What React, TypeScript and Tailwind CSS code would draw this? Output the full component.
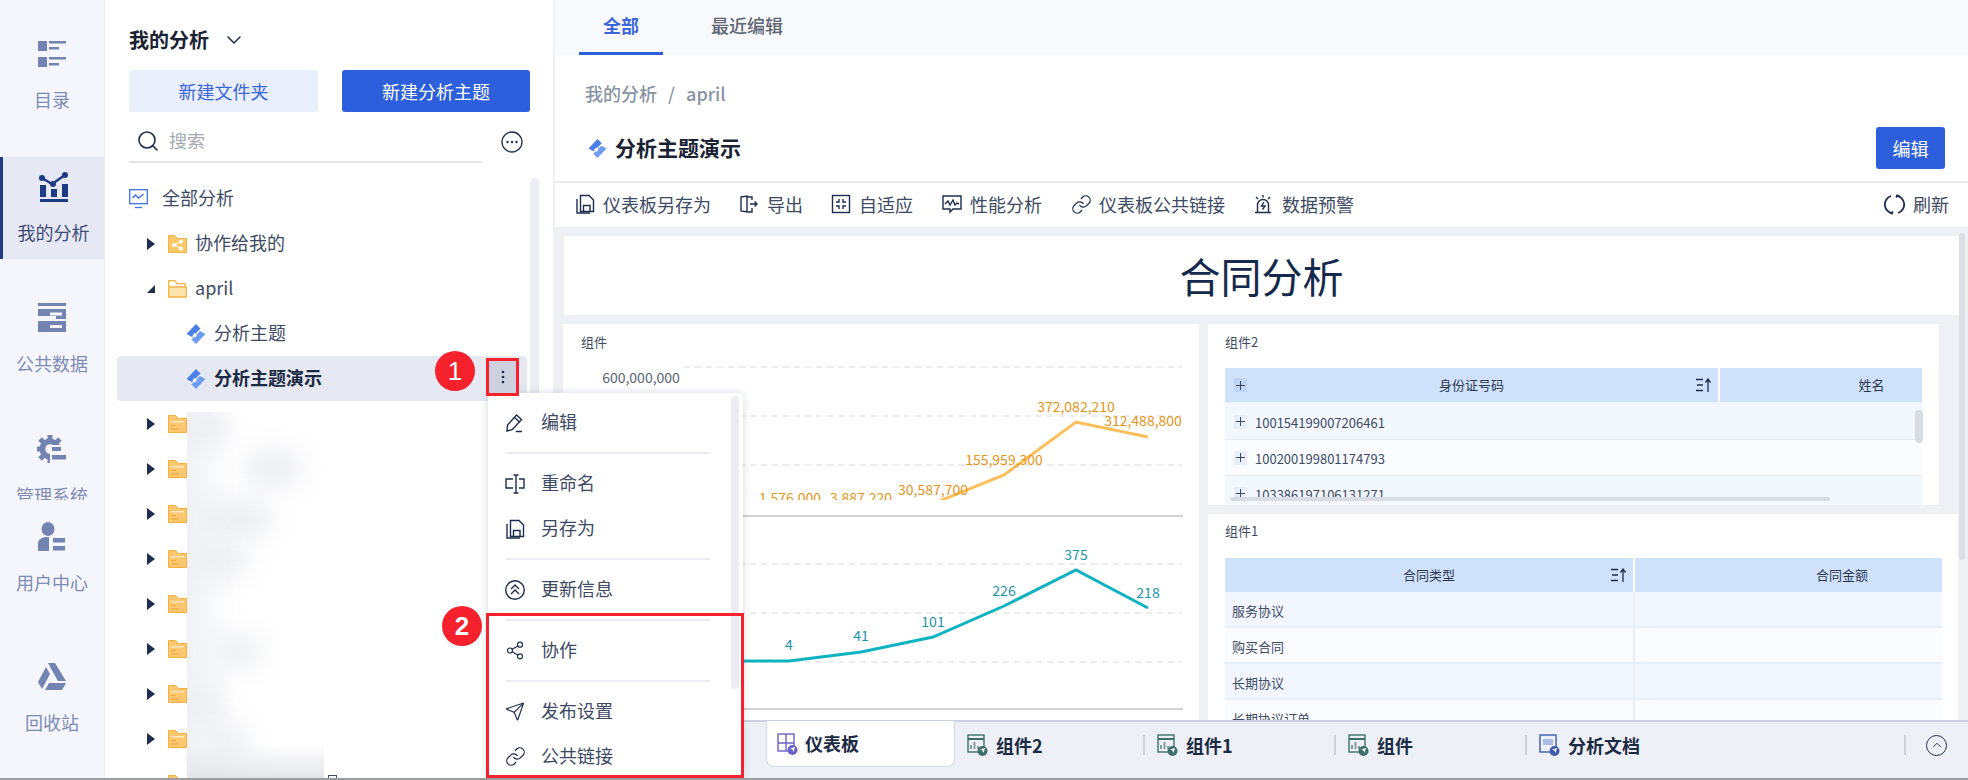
import React from "react";
import { ChevronDown, ChevronUp, Link, Search, Send, Share2 } from "lucide-react";

const ink = "#1e2d4f";

// 左侧导航图标
function RailIcon({ name, color }: { name: string; color: string }) {
  return (
    <svg width="30" height="30" viewBox="0 0 30 30" fill={color} className="shrink-0">
      {name === "list" && (
        <>
          <rect x="1" y="2" width="9" height="10" />
          <rect x="1" y="18" width="9" height="10" />
          <rect x="12" y="2" width="17" height="2.5" />
          <rect x="12" y="8" width="10" height="2.5" />
          <rect x="12" y="18" width="17" height="2.5" />
          <rect x="12" y="24" width="10" height="2.5" />
        </>
      )}
      {name === "chart" && (
        <>
          <rect x="1" y="27" width="28" height="3" />
          <rect x="1" y="13" width="6" height="12" />
          <rect x="12" y="17" width="6" height="8" />
          <rect x="23" y="12" width="6" height="13" />
          <path d="M3 6l10 6 13-9" fill="none" stroke={color} strokeWidth="2.5" />
          <circle cx="3" cy="6" r="3" />
          <circle cx="14" cy="12" r="3" />
          <circle cx="26" cy="3" r="3" />
        </>
      )}
      {name === "data" && (
        <>
          <rect x="1" y="0" width="28" height="3" />
          <path d="M1 6h28v10H19v-3H1zM1 18h28v11H1z" />
          <rect x="13" y="9.500" width="12" height="3" fill="#f4f6fb" />
          <rect x="13" y="22" width="12" height="3" fill="#f4f6fb" />
        </>
      )}
      {name === "gear" && (
        <>
          {[0, 45, 90, 135, 180, 225, 270, 315].map((a) => (
            <rect key={a} x="10.500" y="0" width="5" height="6" transform={`rotate(${a} 13 14)`} />
          ))}
          <circle cx="13" cy="14" r="10.500" />
          <circle cx="13" cy="14" r="4.800" fill="#f4f6fb" />
          <rect x="13" y="10" width="17" height="20" fill="#f4f6fb" />
          <rect x="15" y="12" width="9" height="4" />
          <rect x="15" y="20" width="14" height="4.500" />
          <rect x="13" y="6" width="4" height="3" />
        </>
      )}
      {name === "user" && (
        <>
          <ellipse cx="11" cy="7" rx="6.500" ry="7" />
          <path d="M1 29v-7c0-5 4-7 9-7h2v14z" />
          <rect x="16" y="16" width="12" height="4.500" />
          <rect x="16" y="24" width="12" height="4.500" />
        </>
      )}
      {name === "drive" && (
        <>
          <path d="M11 1h7l11 18h-8z" />
          <path d="M9 5l4 7-8 15-4-7z" />
          <path d="M12 21h17l-4 7H8z" />
        </>
      )}
    </svg>
  );
}

function RailItem({ label, icon, active, top, clip }: { label: string; icon: string; active?: boolean; top: number; clip?: boolean }) {
  return (
    <div
      style={{ marginTop: top }}
      className={`flex flex-col items-center pt-[15px] shrink-0 overflow-hidden ${clip ? "h-[80px]" : "h-[102px]"} ${
        active ? "bg-[#e6e9f3] border-l-[3px] border-[#1f3a85]" : ""
      }`}
    >
      <RailIcon name={icon} color={active ? "#1f3a85" : "#7384b3"} />
      <span className={`mt-[18px] shrink-0 text-[18px] leading-[24px] ${active ? "text-[#3f4c78]" : "text-[#7d8bb5]"}`}>{label}</span>
    </div>
  );
}

function Diamond({ size = 20 }: { size?: number }) {
  return (
    <svg width={size} height={size} viewBox="0 0 20 20" className="shrink-0">
      <polygon points="10,0 14.500,4.500 6,13 .5,10" fill="#4a7ee8" />
      <polygon points="19.500,10 14,7 5.500,15.500 10,20" fill="#6f9cf3" />
      <polygon points="8.500,9 11,11.500 9,13.500 6.500,11" fill="#fff" />
    </svg>
  );
}

function Folder() {
  return (
    <svg width="19" height="18" viewBox="0 0 19 18" className="shrink-0">
      <path d="M.5 17.500V.5h7l3 3h8v14z" fill="#fcc76e" stroke="#f5b040" />
      <rect x="3" y="6" width="13" height="1.500" fill="#feeac2" />
      <rect x="3" y="10" width="5" height="1" fill="#eda93a" />
      <rect x="3" y="13" width="8" height="2" fill="#f3b552" />
    </svg>
  );
}

function Arrow({ open }: { open?: boolean }) {
  return (
    <svg width="8" height="12" viewBox="0 0 8 12" fill="#1e2d4f" className="shrink-0">
      {open ? <path d="M8 2v8H0z" /> : <path d="M0 0l8 6-8 6z" />}
    </svg>
  );
}

function TreeFolder() {
  return (
    <div className="h-[45px] flex items-center pl-[30px] gap-[13px] shrink-0">
      <Arrow />
      <Folder />
    </div>
  );
}

function TreeLabel({ children, className = "" }: { children: React.ReactNode; className?: string }) {
  return <span className={`-mt-[2px] ${className}`}>{children}</span>;
}

function Tree() {
  return (
    <div className="mt-[13px] flex-1 flex flex-col overflow-hidden text-[18px] text-[#3d4a63] ml-[12px] w-[410px]">
      <div className="h-[45px] flex items-center pl-[12px] shrink-0">
        <svg width="19" height="20" viewBox="0 0 19 20" fill="none" stroke="#3f74e6" strokeWidth="1.300">
          <rect x=".7" y=".7" width="17.600" height="14" />
          <path d="M3.500 9l3-3 3 3 5-4" strokeWidth="1.500" />
          <path d="M6 18.500h7" />
        </svg>
        <TreeLabel className="ml-[14px]">全部分析</TreeLabel>
      </div>
      <div className="h-[45px] flex items-center pl-[30px] shrink-0">
        <Arrow />
        <svg width="19" height="18" viewBox="0 0 19 18" className="ml-[13px]">
          <path d="M.5 17.500V.5h6l3 3h9v14z" fill="#fbc76b" stroke="#f5b343" />
          <circle cx="6" cy="10" r="2" fill="#fff" />
          <circle cx="13" cy="6.500" r="2" fill="#fff" />
          <circle cx="13" cy="13.500" r="2" fill="#fff" />
          <path d="M6 10l7-3.500M6 10l7 3.500" stroke="#fff" />
        </svg>
        <TreeLabel className="ml-[8px]">协作给我的</TreeLabel>
      </div>
      <div className="h-[45px] flex items-center pl-[30px] shrink-0">
        <Arrow open />
        <svg width="19" height="18" viewBox="0 0 19 18" className="ml-[13px]" fill="none" stroke="#f5b343" strokeWidth="1.300">
          <path d="M.7 17V.7h6l2.500 3H17v3" />
          <path d="M.7 17V7h17.600v10z" fill="#fde3ae" />
        </svg>
        <TreeLabel className="ml-[8px]">april</TreeLabel>
      </div>
      <div className="h-[45px] flex items-center pl-[69px] gap-[8px] shrink-0">
        <Diamond />
        <TreeLabel>分析主题</TreeLabel>
      </div>
      <div className="h-[45px] flex items-center pl-[69px] gap-[8px] bg-[#e6e9f2] rounded-[4px] shrink-0">
        <Diamond />
        <TreeLabel className="font-bold text-[#1c2a44]">分析主题演示</TreeLabel>
      </div>
      {[0, 1, 2, 3, 4, 5, 6, 7, 8].map((i) => (
        <TreeFolder key={i} />
      ))}
    </div>
  );
}

// 打码区域：几块模糊的灰斑
const blurSpots = [
  { left: 0, top: 0, width: 40, height: 30 },
  { left: 58, top: 40, width: 56, height: 32 },
  { left: 15, top: 92, width: 70, height: 30 },
  { left: 10, top: 135, width: 50, height: 28 },
  { left: 30, top: 225, width: 44, height: 28 },
  { left: 5, top: 275, width: 30, height: 30 },
  { left: 22, top: 315, width: 40, height: 30 },
];

function Blurred() {
  return (
    <div className="absolute left-[82px] top-[412px] w-[137px] h-[366px] overflow-hidden bg-gradient-to-r from-[#f1f2f5] to-white to-[35%]">
      {blurSpots.map((s) => (
        <div key={s.top} style={s} className="absolute rounded-full bg-[#e9eaee] blur-[14px]" />
      ))}
      <div className="absolute left-0 right-0 bottom-0 h-[34px] bg-gradient-to-b from-white/0 to-[#e4e5e9]" />
    </div>
  );
}

function Sidebar() {
  return (
    <aside className="w-[450px] shrink-0 bg-white flex flex-col relative border-r-2 border-[#eef0f4]">
      <div className="pl-[24px] pr-[23px]">
        <div className="mt-[24px] h-[32px] flex items-center text-[20px] leading-[32px] font-bold text-[#1a2233]">
          我的分析
          <ChevronDown size={24} strokeWidth={1.500} className="ml-[13px] text-[#1e2d4f]" />
        </div>
        <div className="mt-[14px] flex justify-between">
          <div className="w-[189px] h-[42px] flex items-center justify-center rounded-[3px] bg-[#e8effb] text-[#3c64db] text-[18px]">新建文件夹</div>
          <div className="w-[188px] h-[42px] flex items-center justify-center rounded-[3px] bg-[#2d5fdc] text-white text-[18px]">新建分析主题</div>
        </div>
        <div className="mt-[8px] flex items-start">
          <div className="w-[353px] h-[43px] border-b-2 border-[#e2e4ea] flex items-center pl-[7px]">
            <Search size={24} strokeWidth={1.600} className="text-[#1e2d4f]" />
            <span className="ml-[9px] text-[18px] text-[#a5a9b2]">搜索</span>
          </div>
          <svg width="22" height="22" viewBox="0 0 22 22" className="ml-[19px] mt-[11px]" fill="#1e2d4f">
            <circle cx="11" cy="11" r="10" fill="none" stroke="#1e2d4f" strokeWidth="1.300" />
            <circle cx="6.500" cy="11" r="1.200" />
            <circle cx="11" cy="11" r="1.200" />
            <circle cx="15.500" cy="11" r="1.200" />
          </svg>
        </div>
      </div>
      <Tree />
      <div className="absolute left-[425px] top-[178px] w-[9px] h-[500px] rounded-full bg-[#ecedf2]" />
      <Blurred />
      <div className="absolute left-[223px] top-[775px] w-[9px] h-[6px] border border-[#3d4a63]" />
    </aside>
  );
}

function MenuItem({ label, icon }: { label: string; icon: React.ReactNode }) {
  return (
    <div className="h-[45px] flex items-center pl-[17px] text-[18px] text-[#3d4a63]">
      <span className="w-[20px] h-[20px] flex items-center justify-center">{icon}</span>
      <span className="ml-[16px] -mt-[2px]">{label}</span>
    </div>
  );
}

function MenuLine() {
  return <div className="my-[7px] h-[2px] ml-[18px] w-[204px] bg-[#ebecf1]" />;
}

function Svg20({ children }: { children: React.ReactNode }) {
  return (
    <svg width="20" height="20" viewBox="0 0 20 20" fill="none" stroke={ink} strokeWidth="1.400" className="shrink-0">
      {children}
    </svg>
  );
}

const saveAsIcon = (
  <Svg20>
    <path d="M5.500 1.500h8.500l4.500 4.500v11.500h-13z" />
    <path d="M8.500 17.500v-6h6.500v6" />
    <path d="M2 5v14h13" />
  </Svg20>
);

const linkIcon = <Link size={21} strokeWidth={1.400} color={ink} className="shrink-0" />;

function ContextMenu() {
  return (
    <div className="absolute left-[488px] top-[393px] w-[255px] h-[387px] bg-white rounded-t-[6px] shadow-[0_0_8px_rgba(30,45,80,0.18)] pt-[7px]">
      <MenuItem
        label="编辑"
        icon={
          <Svg20>
            <path d="M2 18l.5-6 9-10 5 4.500-9 10z" />
            <path d="M11 18.500h6M9.500 4.500l5 4.500" />
          </Svg20>
        }
      />
      <MenuLine />
      <MenuItem
        label="重命名"
        icon={
          <Svg20>
            <path d="M8 5H1v9h7M14 5h5v9h-5" />
            <path d="M11 1v18M8.500 1h5M8.500 19h5" />
          </Svg20>
        }
      />
      <MenuItem label="另存为" icon={saveAsIcon} />
      <MenuLine />
      <MenuItem
        label="更新信息"
        icon={
          <Svg20>
            <circle cx="10" cy="10" r="9.300" />
            <path d="M6 9l4-4 4 4M6 14l4-4 4 4" />
          </Svg20>
        }
      />
      <MenuLine />
      <MenuItem label="协作" icon={<Share2 size={21} strokeWidth={1.400} color={ink} />} />
      <MenuLine />
      <MenuItem label="发布设置" icon={<Send size={21} strokeWidth={1.400} color={ink} />} />
      <MenuItem label="公共链接" icon={linkIcon} />
      <div className="absolute left-[243px] top-[3px] w-[8px] h-[293px] rounded-full bg-[#ecedf2]" />
    </div>
  );
}

function ToolItem({ label, icon, gap, left }: { label: string; icon: React.ReactNode; gap: number; left: number }) {
  return (
    <div style={{ marginLeft: left }} className="flex items-center text-[18px] text-[#3d4a63]">
      {icon}
      <span style={{ marginLeft: gap }}>{label}</span>
    </div>
  );
}

function Toolbar() {
  return (
    <div className="h-[44px] shrink-0 flex items-center bg-white pb-[2px]">
      <ToolItem left={20} gap={8} label="仪表板另存为" icon={saveAsIcon} />
      <ToolItem
        left={28}
        gap={8}
        label="导出"
        icon={
          <Svg20>
            <path d="M2 3l6-1v16l-6-1zM8 3h5v3M13 14v4H8" />
            <path d="M11 10h7M15.500 7.500 18 10l-2.500 2.500" />
          </Svg20>
        }
      />
      <ToolItem
        left={28}
        gap={8}
        label="自适应"
        icon={
          <Svg20>
            <rect x="1.500" y="1.500" width="17" height="17" />
            <path d="M8 5v3H5M12 5v3h3M8 15v-3H5M12 15v-3h3" />
          </Svg20>
        }
      />
      <ToolItem
        left={29}
        gap={8}
        label="性能分析"
        icon={
          <Svg20>
            <path d="M1 2h18v13h-8l-3 3v-3H1z" />
            <path d="M3 10l3-3 2 4 3-5 2 5 2-2 2 1" />
          </Svg20>
        }
      />
      <ToolItem left={29} gap={7} label="仪表板公共链接" icon={linkIcon} />
      <ToolItem
        left={28}
        gap={9}
        label="数据预警"
        icon={
          <Svg20>
            <path d="M4.500 18V11a5.500 5.500 0 0 1 11 0v7M2 18.500h16" />
            <path d="M11 8l-2.500 4H12l-2.500 3.500" />
            <path d="M10 1v2.500M3 3l2 2M17 3l-2 2" />
          </Svg20>
        }
      />
      <div className="ml-auto mr-[19px] flex items-center text-[18px] text-[#3d4a63]">
        <svg width="21" height="21" viewBox="0 0 21 21" fill="none" stroke={ink} strokeWidth="1.800">
          <path d="M12 1.500A9 9 0 0 1 14 19" />
          <path d="M9 19.500A9 9 0 0 1 7 2" />
          <path d="M12 3.500 14 1M9 17.500 7 20" />
        </svg>
        <span className="ml-[8px]">刷新</span>
      </div>
    </div>
  );
}

function ChartPanel() {
  const grid1 = [367, 416, 465];
  const grid2 = [564, 613, 662];
  const orangeLabels: [string, number, number][] = [
    ["1,576,000", 790, 503],
    ["3,887,220", 861, 503],
    ["30,587,700", 933, 495],
    ["155,959,300", 1004, 465],
    ["372,082,210", 1076, 412],
    ["312,488,800", 1143, 426],
  ];
  const tealLabels: [string, number, number][] = [
    ["4", 789, 650],
    ["41", 861, 641],
    ["101", 933, 627],
    ["226", 1004, 596],
    ["375", 1076, 560],
    ["218", 1148, 598],
  ];
  return (
    <div className="w-[636px] shrink-0 bg-white h-[396px] relative">
      <div className="pl-[18px] pt-[9px] text-[13px] leading-[18px] text-[#3d4a63]">组件</div>
      <svg width="636" height="360" viewBox="563 360 636 360" className="block mt-[9px]" fontSize="14" textAnchor="middle">
        <defs>
          <clipPath id="top-chart">
            <rect x="563" y="360" width="636" height="140" />
          </clipPath>
        </defs>
        {[...grid1, ...grid2].map((y) => (
          <line key={y} x1="684" x2="1182" y1={y} y2={y} stroke="#e6e6e8" strokeWidth="1.500" strokeDasharray="6 5" />
        ))}
        <line x1="684" x2="1183" y1="516" y2="516" stroke="#d2d2d5" strokeWidth="2" />
        <line x1="684" x2="1183" y1="709" y2="709" stroke="#d2d2d5" strokeWidth="2" />
        <text x="641" y="383" fill="#5a6375">600,000,000</text>
        <g clipPath="url(#top-chart)">
          <polyline points="900,520 942,500 1004,475 1076,422 1148,437" fill="none" stroke="#ffbe5c" strokeWidth="3" />
          {orangeLabels.map(([t, x, y]) => (
            <text key={t} x={x} y={y} fill="#e6941a">{t}</text>
          ))}
        </g>
        <polyline points="740,661 789,661 861,652 933,637 1004,606 1076,570 1148,608" fill="none" stroke="#0eb3c2" strokeWidth="3" />
        {tealLabels.map(([t, x, y]) => (
          <text key={t} x={x} y={y} fill="#1a95a8">{t}</text>
        ))}
      </svg>
    </div>
  );
}

function SortIcon() {
  return (
    <svg width="15" height="14" viewBox="0 0 15 14" fill="none" stroke="#1e2d4f" strokeWidth="1.300" className="shrink-0">
      <path d="M0 1.500h7M1 7h6M0 12.500h7" />
      <path d="M12 14V2M9.500 4.500 12 1l2.500 3.500" />
    </svg>
  );
}

function PlusBox({ light }: { light?: boolean }) {
  return (
    <span className={`w-[13px] h-[14px] flex items-center justify-center shrink-0 text-[#3d4a63] ${light ? "bg-[#e9eff8]" : "bg-[#c0d5f3]"}`}>
      <svg width="9" height="9" viewBox="0 0 9 9" stroke="#3d4a63" strokeWidth="1">
        <path d="M4.500 0v9M0 4.500h9" />
      </svg>
    </span>
  );
}

function TablePanel2() {
  const rows = ["100154199007206461", "100200199801174793", "103386197106131271"];
  return (
    <div className="mr-[19px] h-[181px] shrink-0 bg-white relative overflow-hidden">
      <div className="pl-[17px] pt-[9px] text-[13px] leading-[18px] text-[#3d4a63]">组件2</div>
      <div className="ml-[17px] mr-[17px] mt-[17px] text-[13px] text-[#2c3950]">
        <div className="h-[36px] flex border-b-2 border-[#edf3fc] bg-[#cfe1fb]">
          <div className="w-[496px] relative flex items-center justify-between pl-[9px] pr-[7px] border-r-2 border-white">
            <PlusBox />
            <span className="absolute inset-x-0 text-center">身份证号码</span>
            <SortIcon />
          </div>
          <div className="w-[202px] flex items-center justify-center pl-[101px]">姓名</div>
        </div>
        {rows.map((r, i) => (
          <div key={r} className={`h-[36px] flex items-center pl-[9px] border-b border-[#e6edf8] ${i % 2 === 0 ? "bg-[#f3f7fe]" : "bg-[#fafcff]"}`}>
            <PlusBox light />
            <span className="ml-[8px] pt-[3px] text-[#3d4a63]">{r}</span>
          </div>
        ))}
      </div>
      <div className="absolute left-[707px] top-[86px] w-[8px] h-[33px] rounded-full bg-[#d8dce4]" />
      <div className="absolute left-[22px] top-[173px] w-[600px] h-[4px] rounded-full bg-[#d8dce4]" />
    </div>
  );
}

function TablePanel1() {
  const rows = ["服务协议", "购买合同", "长期协议", "长期协议订单"];
  return (
    <div className="mt-[9px] flex-1 bg-white overflow-hidden">
      <div className="pl-[17px] pt-[8px] text-[13px] leading-[18px] text-[#3d4a63]">组件1</div>
      <div className="ml-[17px] w-[717px] mt-[18px] text-[13px] text-[#2c3950]">
        <div className="h-[34px] flex bg-[#cfe1fb]">
          <div className="w-[410px] relative flex items-center justify-end pr-[7px] border-r-2 border-white">
            <span className="absolute inset-x-0 text-center">合同类型</span>
            <SortIcon />
          </div>
          <div className="flex-1 flex items-center justify-center pl-[107px]">合同金额</div>
        </div>
        {rows.map((r, i) => (
          <div key={r} className={`h-[36px] flex border-b-2 border-[#e6eefa] ${i % 2 === 0 ? "bg-[#f2f6fe]" : "bg-[#fbfcff]"}`}>
            <div className="w-[410px] flex items-center pl-[7px] pt-[3px] border-r-2 border-[#e6eefa] text-[#3d4a63]">{r}</div>
          </div>
        ))}
      </div>
    </div>
  );
}

function TabIcon({ color, kind }: { color: string; kind: "chart" | "board" | "doc" }) {
  return (
    <svg width="21" height="22" viewBox="0 0 21 22" fill="none" stroke={color} strokeWidth="1.400" className="shrink-0">
      <rect x="1" y="1" width="16" height="17" />
      {kind === "chart" && (
        <>
          <path d="M1 5h16" strokeWidth="2" />
          <path d="M4 15v-4M7.500 15V8M11 15v-3" strokeWidth="1.800" opacity="0.7" />
        </>
      )}
      {kind === "board" && <path d="M1 10h16M9 1v17" />}
      {kind === "doc" && <rect x="4" y="5" width="10" height="6" fill="#a9bbe6" stroke="none" />}
      <circle cx="15.500" cy="17" r="5" fill={color} stroke="none" />
      <path d="M13 15.500l5-1.500-1.500 5-1-2.500z" fill="#fff" stroke="none" />
    </svg>
  );
}

function BottomTab({ label, icon, width, sep }: { label: string; icon: React.ReactNode; width: number; sep?: boolean }) {
  return (
    <div style={{ width }} className="flex items-center pl-[12px] relative">
      {icon}
      <span className="ml-[8px] text-[18px] font-bold text-[#1c2a44]">{label}</span>
      {sep && <span className="absolute right-0 w-[2px] h-[20px] bg-[#cdd2dc]" />}
    </div>
  );
}

function BottomBar() {
  return (
    <div className="h-[58px] shrink-0 bg-[#edf0f6] border-t-2 border-[#cdd2de] flex items-start pl-[211px] pr-[21px]">
      <div className="w-[189px] h-[46px] -mt-[1px] flex items-center pl-[10px] bg-white rounded-b-[8px] border border-t-0 border-[#d5d9e3]">
        <TabIcon color="#6a62c6" kind="board" />
        <span className="ml-[7px] text-[18px] font-bold text-[#1c2a44]">仪表板</span>
      </div>
      <div className="h-[46px] flex items-center">
        <BottomTab width={190} sep label="组件2" icon={<TabIcon color="#3f6f6c" kind="chart" />} />
        <BottomTab width={191} sep label="组件1" icon={<TabIcon color="#3f6f6c" kind="chart" />} />
        <BottomTab width={191} sep label="组件" icon={<TabIcon color="#3f6f6c" kind="chart" />} />
        <BottomTab width={379} sep label="分析文档" icon={<TabIcon color="#3e5ba9" kind="doc" />} />
      </div>
      <div className="ml-auto h-[46px] flex items-center">
        <span className="w-[21px] h-[21px] rounded-full border-[1.500px] border-[#1e2d4f] flex items-center justify-center">
          <ChevronUp size={14} strokeWidth={1.600} className="text-[#1e2d4f]" />
        </span>
      </div>
    </div>
  );
}

function Main() {
  return (
    <main className="flex-1 min-w-0 flex flex-col relative">
      <div className="h-[55px] shrink-0 bg-[#f8f9fd] flex items-center text-[18px] font-medium pl-[48px] pb-[5px]">
        <span className="text-[#3c64db] font-bold relative">
          全部
          <span className="absolute -left-[24px] top-[40px] w-[84px] h-[5px] bg-[#2d5fdc]" />
        </span>
        <span className="ml-[72px] text-[#5d6673]">最近编辑</span>
      </div>
      <div className="h-[128px] shrink-0 bg-white border-b-2 border-[#e9ebef] relative pl-[30px]">
        <div className="pt-[25px] h-[78px] text-[18px] leading-[26px] font-medium text-[#8a93a3]">
          我的分析<span className="mx-[11px]">/</span>april
        </div>
        <div className="flex items-center h-[30px]">
          <span className="ml-[3px]">
            <Diamond size={19} />
          </span>
          <span className="ml-[8px] text-[21px] font-bold text-[#1a2233]">分析主题演示</span>
        </div>
        <div className="absolute right-[23px] top-[72px] w-[69px] h-[42px] rounded-[3px] bg-[#2d5fdc] text-white text-[18px] flex items-center justify-center">编辑</div>
      </div>
      <Toolbar />
      <div className="flex-1 min-h-0 bg-[#eff0f4] pt-[9px] pl-[9px] flex flex-col relative overflow-hidden">
        <div className="h-[79px] shrink-0 mr-[9px] bg-white flex items-center justify-center text-[41px] text-[#14294b]">合同分析</div>
        <div className="mt-[9px] flex-1 flex gap-[9px] min-h-0 -ml-[1px]">
          <ChartPanel />
          <div className="flex-1 flex flex-col min-w-0 mr-[10px]">
            <TablePanel2 />
            <TablePanel1 />
          </div>
        </div>
        <div className="absolute right-[3px] top-[6px] w-[6px] h-[327px] rounded-full bg-[#dcdee3]" />
      </div>
      <BottomBar />
    </main>
  );
}

export default function App() {
  return (
    <div className="w-[1968px] h-[780px] flex flex-col overflow-hidden bg-white [font-family:'Noto_Sans_CJK_SC',sans-serif]">
      <div className="h-[778px] flex relative overflow-hidden">
        <nav className="w-[105px] shrink-0 bg-[#f4f6fb] flex flex-col border-r border-[#eceef4] overflow-hidden">
          <RailItem top={24} label="目录" icon="list" />
          <RailItem top={31} active label="我的分析" icon="chart" />
          <RailItem top={29} label="公共数据" icon="data" />
          <RailItem top={30} clip label="管理系统" icon="gear" />
          <RailItem top={7} label="用户中心" icon="user" />
          <RailItem top={38} label="回收站" icon="drive" />
        </nav>
        <Sidebar />
        <Main />
        {/* 标注 */}
        <ContextMenu />
        <div className="absolute left-[435px] top-[351px] w-[40px] h-[40px] rounded-full bg-[#f5222d] text-white text-[26px] leading-[40px] text-center [font-family:'Liberation_Sans',sans-serif]">1</div>
        <div className="absolute left-[486px] top-[358px] w-[33px] h-[38px] border-[3px] border-[#f5222d] bg-[#cdd1de] flex items-center justify-center">
          <svg width="4" height="14" viewBox="0 0 4 14" fill="#1e2d4f">
            <circle cx="2" cy="2" r="1.300" />
            <circle cx="2" cy="7" r="1.300" />
            <circle cx="2" cy="12" r="1.300" />
          </svg>
        </div>
        <div className="absolute left-[486px] top-[613px] w-[258px] h-[165px] border-[3px] border-[#f5222d]" />
        <div className="absolute left-[442px] top-[606px] w-[40px] h-[40px] rounded-full bg-[#f5222d] text-white text-[26px] font-bold leading-[40px] text-center [font-family:'Liberation_Sans',sans-serif]">2</div>
      </div>
      <div className="h-[2px] bg-[#9a9ca0]" />
    </div>
  );
}
